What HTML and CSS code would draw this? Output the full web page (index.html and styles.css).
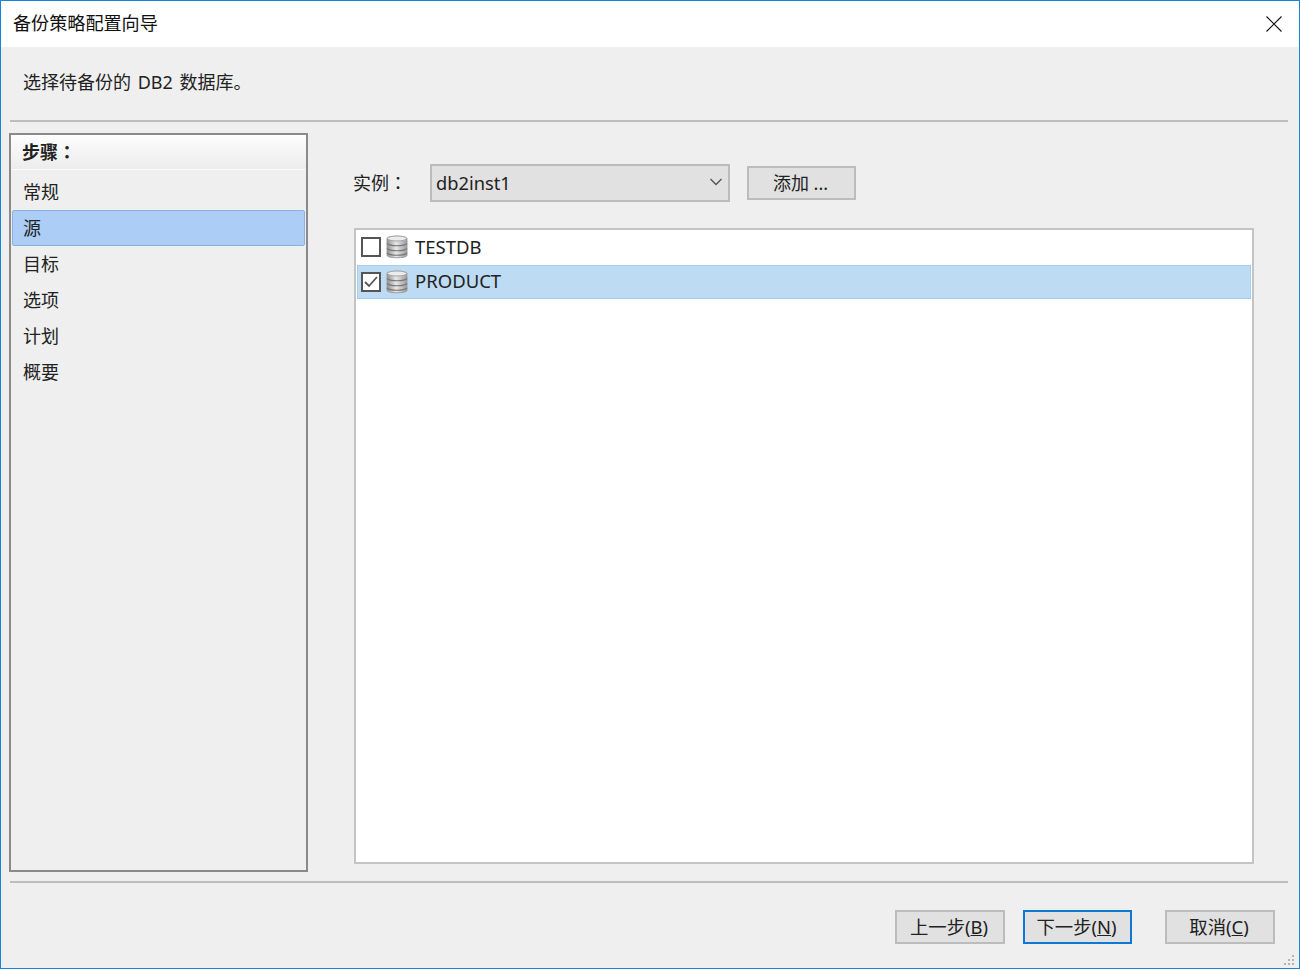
FILE: index.html
```html
<!DOCTYPE html>
<html lang="zh-CN">
<head>
<meta charset="utf-8">
<title>备份策略配置向导</title>
<link rel="stylesheet" href="styles.css">
</head>
<body>
<div class="window">
  <header class="titlebar">
    <span class="title">备份策略配置向导</span>
    <svg class="close" width="16" height="16" viewBox="0 0 16 16"><path d="M0.5 0.5L15.5 15.5M15.5 0.5L0.5 15.5" stroke="#111" stroke-width="1.1" fill="none"/></svg>
  </header>
  <div class="intro">选择待备份的 DB2 数据库。</div>
  <div class="rule"></div>
  <main class="main">
    <nav class="steps">
      <div class="steps-head">步骤<span class="colon" lang="zh-TW">：</span></div>
      <div class="step first">常规</div>
      <div class="step active">源</div>
      <div class="step">目标</div>
      <div class="step">选项</div>
      <div class="step">计划</div>
      <div class="step">概要</div>
    </nav>
    <section class="content">
      <div class="instance-row">
        <span class="instance-label">实例<span class="colon" lang="zh-TW">：</span></span>
        <div class="select">
          <span>db2inst1</span>
          <svg width="14" height="8" viewBox="0 0 14 8"><path d="M1.5 1L7 6.5L12.5 1" stroke="#555" stroke-width="1.4" fill="none"/></svg>
        </div>
        <button class="btn add-btn">添加 ...</button>
      </div>
      <div class="db-list">
        <div class="db-row">
          <span class="check"></span>
          <svg class="db-icon" width="22" height="24" viewBox="0 0 22 24"><use href="#db"/></svg>
          <span class="db-name">TESTDB</span>
        </div>
        <div class="db-row selected">
          <span class="check"><svg width="16" height="16" viewBox="0 0 16 16"><path d="M2 8L6 12L14 3" stroke="#555" stroke-width="1.8" fill="none"/></svg></span>
          <svg class="db-icon" width="22" height="24" viewBox="0 0 22 24"><use href="#db"/></svg>
          <span class="db-name">PRODUCT</span>
        </div>
      </div>
    </section>
  </main>
  <div class="rule rule-bottom"></div>
  <footer class="footer">
    <button class="btn">上一步(<u>B</u>)</button>
    <button class="btn primary">下一步(<u>N</u>)</button>
    <button class="btn cancel">取消(<u>C</u>)</button>
    <svg class="grip" width="12" height="12" viewBox="0 0 12 12" fill="#b4b4b4"><rect x="8" y="0" width="2" height="2"/><rect x="4" y="4" width="2" height="2"/><rect x="8" y="4" width="2" height="2"/><rect x="0" y="8" width="2" height="2"/><rect x="4" y="8" width="2" height="2"/><rect x="8" y="8" width="2" height="2"/></svg>
  </footer>
</div>
<svg class="defs" width="0" height="0">
  <defs>
    <linearGradient id="dbg" x1="0" x2="1" y1="0" y2="0">
      <stop offset="0" stop-color="#8e8e8e"/><stop offset="0.45" stop-color="#e8e8e8"/><stop offset="1" stop-color="#9a9a9a"/>
    </linearGradient>
    <g id="db">
      <path d="M1 3.5C1 0.5 21 0.5 21 3.5V20.5C21 23.5 1 23.5 1 20.5Z" fill="url(#dbg)" stroke="#a0a0a0" stroke-width="1"/>
      <ellipse cx="11" cy="3.5" rx="9.5" ry="2.5" fill="#ececec" stroke="#a5a5a5"/>
      <path d="M1 8.5C4 11.5 18 11.5 21 8.5M1 13.5C4 16.5 18 16.5 21 13.5M1 18C4 21 18 21 21 18" stroke="#777" stroke-width="1.2" fill="none"/>
    </g>
  </defs>
</svg>
</body>
</html>
```
FILE: styles.css
```css
* { box-sizing: border-box; }
html, body { margin: 0; padding: 0; }
body {
  width: 1300px;
  height: 969px;
  overflow: hidden;
  font-family: "Noto Sans", "Noto Sans CJK SC", sans-serif;
  font-size: 18px;
  color: #222;
}
.window {
  width: 1300px;
  height: 969px;
  border: 1px solid #1883d7;
  background: #efefef;
  display: flex;
  flex-direction: column;
}
.titlebar {
  height: 46px;
  background: #fff;
  display: flex;
  align-items: center;
  justify-content: space-between;
  padding: 0 17px 1px 12px;
  flex: none;
}
.title { color: #111; font-size: 18.1px; padding-bottom: 4px; }
.close { display: block; }
.intro {
  height: 73px;
  flex: none;
  display: flex;
  align-items: center;
  padding: 0 0 5px 22px;
  word-spacing: 2px;
}
.rule {
  height: 2px;
  flex: none;
  margin: 0 11px 0 9px;
  background: #bdbdbd;
}
.main {
  flex: none;
  height: 739px;
  margin-top: 11px;
  display: flex;
}
.steps {
  width: 299px;
  margin-left: 8px;
  border: 2px solid #8a8a8a;
  flex: none;
}
.steps-head {
  height: 35px;
  padding: 0 0 2px 11px;
  display: flex;
  align-items: center;
  font-weight: bold;
  background: linear-gradient(#fdfdfd, #ececec);
  border-bottom: 1px solid #fafafa;
}
.colon { font-family: "Noto Sans CJK TC", sans-serif; }
.step {
  height: 36px;
  display: flex;
  align-items: center;
  margin: 0 1px;
  padding: 0 0 3px 11px;
}
.step.first { margin-top: 4px; }
.step.active {
  background: #abcdf6;
  border: 1px solid #8fb0dc;
  border-radius: 2px;
  padding-left: 10px;
}
.content {
  margin-left: 46px;
  width: 900px;
  flex: none;
  display: flex;
  flex-direction: column;
}
.instance-row {
  height: 38px;
  margin-top: 31px;
  display: flex;
  align-items: center;
}
.instance-label { width: 77px; flex: none; margin-left: -1px; padding-bottom: 2px; }
.select {
  width: 300px;
  height: 38px;
  flex: none;
  background: #e1e1e1;
  border: 2px solid #bcbcbc;
  display: flex;
  align-items: center;
  justify-content: space-between;
  padding: 0 5px 2px 4px;
  font-size: 18.3px;
}
.btn {
  width: 110px;
  height: 34px;
  flex: none;
  padding: 0 2px 2px 0;
  background: #e1e1e1;
  border: 2px solid #bcbcbc;
  font: inherit;
  color: inherit;
}
.add-btn { margin-left: 17px; width: 109px; }
.db-list {
  margin-top: 26px;
  height: 636px;
  flex: none;
  background: #fff;
  border: 2px solid #c4c4c4;
  padding: 1px 1px 1px 1px;
}
.db-row {
  height: 34px;
  display: flex;
  align-items: center;
  padding: 0 0 2px 4px;
  font-size: 18.5px;
}
.db-row.selected {
  height: 34px;
  background: #bddbf2;
  border: 1px solid #a5cdee;
  padding: 0 0 1px 3px;
}
.db-name { padding-bottom: 2px; }
.check {
  width: 20px;
  height: 20px;
  flex: none;
  border: 2px solid #555;
  background: #fff;
  display: flex;
  align-items: center;
  justify-content: center;
}
.db-icon { margin: 0 7px 0 5px; flex: none; }
.rule-bottom { margin-top: 9px; }
.footer {
  flex: 1;
  position: relative;
  display: flex;
  align-items: flex-start;
  padding: 27px 0 0 894px;
}
.footer .btn { width: 110px; height: 34px; font-size: 18.4px; }
.footer .primary {
  margin-left: 18px;
  border-color: #0f78d4;
  width: 109px;
}
.footer .cancel { margin-left: 33px; }
.grip { position: absolute; right: 3px; bottom: 1px; }
.defs { position: absolute; }
```
